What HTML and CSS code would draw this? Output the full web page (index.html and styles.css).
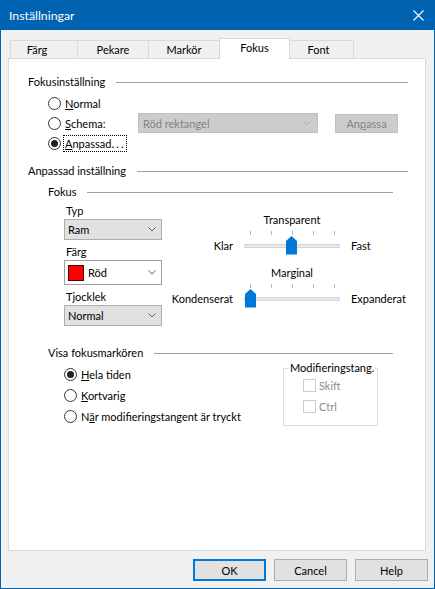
FILE: index.html
```html
<!DOCTYPE html>
<html lang="sv">
<head>
<meta charset="utf-8">
<title>Inställningar</title>
<link rel="stylesheet" href="styles.css">
</head>
<body>
<div class="window">
  <div class="titlebar">
    <span class="title">Inställningar</span>
    <svg class="close" width="11" height="11" viewBox="0 0 11 11"><path d="M0.5 0.5 L10.5 10.5 M10.5 0.5 L0.5 10.5" stroke="#fff" stroke-width="1.1" fill="none"/></svg>
  </div>
  <div class="tabs">
    <div class="tab t1">Färg</div>
    <div class="tab t2">Pekare</div>
    <div class="tab t3">Markör</div>
    <div class="tab t4 sel">Fokus</div>
    <div class="tab t5">Font</div>
  </div>
  <div class="panel">
    <div class="head top"><span>Fokusinställning</span><i class="rule"></i></div>
    <div class="radios r1">
      <div class="row"><span class="radio"></span><span class="lbl"><u>N</u>ormal</span></div>
      <div class="row">
        <div class="rl"><span class="radio"></span><span class="lbl"><u>S</u>chema:</span></div>
        <div class="select dis"><span>Röd rektangel</span><svg class="chev" width="8" height="5" viewBox="0 0 8 5"><path d="M0.5 0.5 L4 4 L7.5 0.5" fill="none" stroke="#b0b0b0"/></svg></div>
        <div class="btn-dis">An<u>p</u>assa</div>
      </div>
      <div class="row"><span class="radio on"></span><span class="lbl focus"><u>A</u>npassad<span class="dots">...</span></span></div>
    </div>

    <div class="head top h2"><span>Anpassad inställning</span><i class="rule"></i></div>
    <div class="head sub h3"><span>Fokus</span><i class="rule"></i></div>

    <div class="fokus">
      <div class="col">
        <div class="flabel">Typ</div>
        <div class="select std"><span>Ram</span><svg class="chev" width="8" height="5" viewBox="0 0 8 5"><path d="M0.5 0.5 L4 4 L7.5 0.5" fill="none" stroke="#606060"/></svg></div>
        <div class="flabel next">Färg</div>
        <div class="select color"><span class="val"><span class="swatch"></span>Röd</span><svg class="chev" width="8" height="5" viewBox="0 0 8 5"><path d="M0.5 0.5 L4 4 L7.5 0.5" fill="none" stroke="#606060"/></svg></div>
        <div class="flabel next">Tjocklek</div>
        <div class="select std"><span>Normal</span><svg class="chev" width="8" height="5" viewBox="0 0 8 5"><path d="M0.5 0.5 L4 4 L7.5 0.5" fill="none" stroke="#606060"/></svg></div>
      </div>
      <div class="sliders">
        <div class="slider">
          <span class="cap">Transparent</span>
          <span class="side l">Klar</span>
          <svg class="track" width="96" height="24" viewBox="0 0 96 24">
            <path d="M6.5 0 V4 M27.5 0 V4 M48.5 0 V4 M69.5 0 V4 M90.5 0 V4" stroke="#b8b8b8" fill="none"/>
            <rect x="0.5" y="13.5" width="95" height="3" fill="#e7e7e7" stroke="#d6d6d6"/>
            <polygon points="42,10 47.5,5 53,10 53,23.5 42,23.5" fill="#0078d7"/>
          </svg>
          <span class="side r">Fast</span>
        </div>
        <div class="slider">
          <span class="cap">Marginal</span>
          <span class="side l">Kondenserat</span>
          <svg class="track" width="96" height="24" viewBox="0 0 96 24">
            <path d="M6.5 0 V4 M27.5 0 V4 M48.5 0 V4 M69.5 0 V4 M90.5 0 V4" stroke="#b8b8b8" fill="none"/>
            <rect x="0.5" y="13.5" width="95" height="3" fill="#e7e7e7" stroke="#d6d6d6"/>
            <polygon points="1,10 6.5,5 12,10 12,23.5 1,23.5" fill="#0078d7"/>
          </svg>
          <span class="side r">Expanderat</span>
        </div>
      </div>
    </div>

    <div class="head sub h4"><span>Visa fokusmarkören</span><i class="rule"></i></div>
    <div class="visa">
      <div class="radios2">
        <div class="row r21"><span class="radio on"></span><span class="lbl"><u>H</u>ela tiden</span></div>
        <div class="row r21"><span class="radio"></span><span class="lbl"><u>K</u>ortvarig</span></div>
        <div class="row r21"><span class="radio"></span><span class="lbl">N<u>ä</u>r modifieringstangent är tryckt</span></div>
      </div>
      <fieldset class="mod">
        <legend>Modifieringstang.</legend>
        <div class="cb-row"><span class="cb"></span>Skift</div>
        <div class="cb-row"><span class="cb"></span>Ctrl</div>
      </fieldset>
    </div>
  </div>
  <div class="buttons">
    <div class="btn def">OK</div>
    <div class="btn">Cancel</div>
    <div class="btn">Help</div>
  </div>
</div>
</body>
</html>
```
FILE: styles.css
```css
* { box-sizing: border-box; }
html, body { margin: 0; padding: 0; }
body {
  width: 435px;
  height: 589px;
  overflow: hidden;
  font-family: Lato, "Liberation Sans", sans-serif;
  font-size: 11px;
  color: #000;
  background: #f0f0f0;
}
u { text-decoration: underline; text-underline-offset: 1px; }

.window {
  width: 435px;
  height: 589px;
  border: 1px solid #0063b1;
  border-top: 0;
  background: #f0f0f0;
  display: flex;
  flex-direction: column;
}

.titlebar {
  height: 30px;
  flex: none;
  background: #0063b1;
  color: #fff;
  display: flex;
  align-items: center;
  justify-content: space-between;
  padding: 0 10px 0 8px;
  font-size: 12.3px;
}
.close { display: block; }

.tabs {
  display: flex;
  align-items: flex-end;
  height: 20px;
  margin-top: 8px;
  padding-left: 9px;
  flex: none;
}
.tab {
  height: 18px;
  border: 1px solid #d9d9d9;
  border-bottom: 0;
  background: #f0f0f0;
  display: flex;
  align-items: center;
  justify-content: center;
  margin-left: -1px;
  line-height: 14px;
  padding-top: 1px;
}
.tab:first-child { margin-left: 0; }
.t1 { width: 68px; padding-right: 14px; }
.t2 { width: 72px; }
.t3 { width: 72px; }
.t4 { width: 71px; }
.t5 { width: 65px; padding-right: 6px; }
.tab.sel {
  height: 21px;
  margin-bottom: -1px;
  background: #fff;
  position: relative;
  z-index: 1;
  padding-top: 0;
  padding-bottom: 2px;
}

.panel {
  margin-left: 7px;
  width: 418px;
  height: 493px;
  flex: none;
  background: #fff;
  border: 1px solid #d9d9d9;
  padding-top: 16px;
}

.head {
  display: flex;
  align-items: center;
  height: 14px;
  line-height: 14px;
  white-space: nowrap;
}
.head .rule {
  flex: 1;
  height: 0;
  border-top: 1px solid #a0a0a0;
  margin-left: 11px;
}
.head.top { padding-left: 19px; margin-right: 17px; }
.head.sub { padding-left: 39px; margin-right: 32px; }
.h2 { margin-top: 11px; }
.h3 { margin-top: 7px; }
.h4 { margin-top: 20px; }

.radios { margin-left: 39px; margin-top: 4px; }
.row { display: flex; align-items: center; height: 20px; white-space: nowrap; }
.row.r21 { height: 21px; }
.rl { width: 90px; display: flex; align-items: center; }

.radio {
  width: 13px;
  height: 13px;
  flex: none;
  border: 1px solid #333;
  border-radius: 50%;
  background: #fff;
  display: flex;
  align-items: center;
  justify-content: center;
}
.radio.on::after {
  content: "";
  width: 7px;
  height: 7px;
  border-radius: 50%;
  background: #222;
}
.lbl {
  margin-left: 2px;
  padding: 0 1px;
  border: 1px solid transparent;
  line-height: 15px;
}
.lbl.focus { border: 1px dotted #000; padding-right: 0; }
.dots { letter-spacing: 2.2px; }

.select {
  height: 21px;
  display: flex;
  align-items: center;
  justify-content: space-between;
  padding: 0 5px 0 3px;
  border: 1px solid #adadad;
  background: #e1e1e1;
  white-space: nowrap;
}
.chev { display: block; flex: none; }
.select.dis {
  width: 180px;
  height: 20px;
  background: #cccccc;
  border-color: #bfbfbf;
  color: #838383;
  padding-left: 4px;
  padding-right: 6px;
}
.btn-dis {
  margin-left: 17px;
  width: 63px;
  height: 19px;
  background: #cccccc;
  border: 1px solid #bfbfbf;
  color: #838383;
  display: flex;
  align-items: center;
  justify-content: center;
}

.fokus { display: flex; margin-top: 4px; padding-left: 55px; }
.col { width: 98px; flex: none; }
.flabel { line-height: 15px; padding-left: 2px; margin-bottom: 1px; }
.flabel.next { margin-top: 4px; }
.select.color {
  height: 25px;
  background: #fff;
  border-color: #a0a0a0;
}
.val { display: flex; align-items: center; }
.swatch {
  width: 16px;
  height: 16px;
  background: #ff0000;
  border: 1px solid #4a0000;
  margin-right: 4px;
}

.sliders { margin-left: 8px; margin-top: 10px; }
.slider {
  display: grid;
  grid-template-columns: 63px 96px auto;
  column-gap: 11px;
  row-gap: 4px;
}
.slider + .slider { margin-top: 11px; }
.cap {
  grid-column: 2;
  grid-row: 1;
  justify-self: center;
  line-height: 14px;
  white-space: nowrap;
}
.side { grid-row: 2; line-height: 14px; margin-top: 8px; white-space: nowrap; }
.side.l { grid-column: 1; justify-self: end; }
.side.r { grid-column: 3; }
.track { grid-column: 2; grid-row: 2; display: block; }

.visa {
  display: flex;
  align-items: flex-start;
  margin-top: 1px;
  padding-left: 55px;
}
.radios2 { padding-top: 3px; }
fieldset.mod {
  margin: 0 47px 0 auto;
  width: 95px;
  min-width: 0;
  border: 1px solid #dcdcdc;
  padding: 0 0 8px 5px;
}
fieldset.mod legend {
  padding: 0 1px;
  line-height: 14px;
  white-space: nowrap;
}
.cb-row {
  display: flex;
  align-items: center;
  height: 21px;
  padding-left: 14px;
  color: #8c8c8c;
}
.cb {
  width: 13px;
  height: 13px;
  border: 1px solid #cccccc;
  background: #fff;
  margin-right: 3px;
}

.buttons {
  display: flex;
  justify-content: flex-end;
  gap: 8px;
  margin-top: 8px;
  padding-right: 6px;
  flex: none;
}
.btn {
  width: 73px;
  height: 22px;
  background: #e1e1e1;
  border: 1px solid #adadad;
  display: flex;
  align-items: center;
  justify-content: center;
}
.btn.def {
  border-color: #0078d7;
  box-shadow: inset 0 0 0 1px #0078d7;
}
```
